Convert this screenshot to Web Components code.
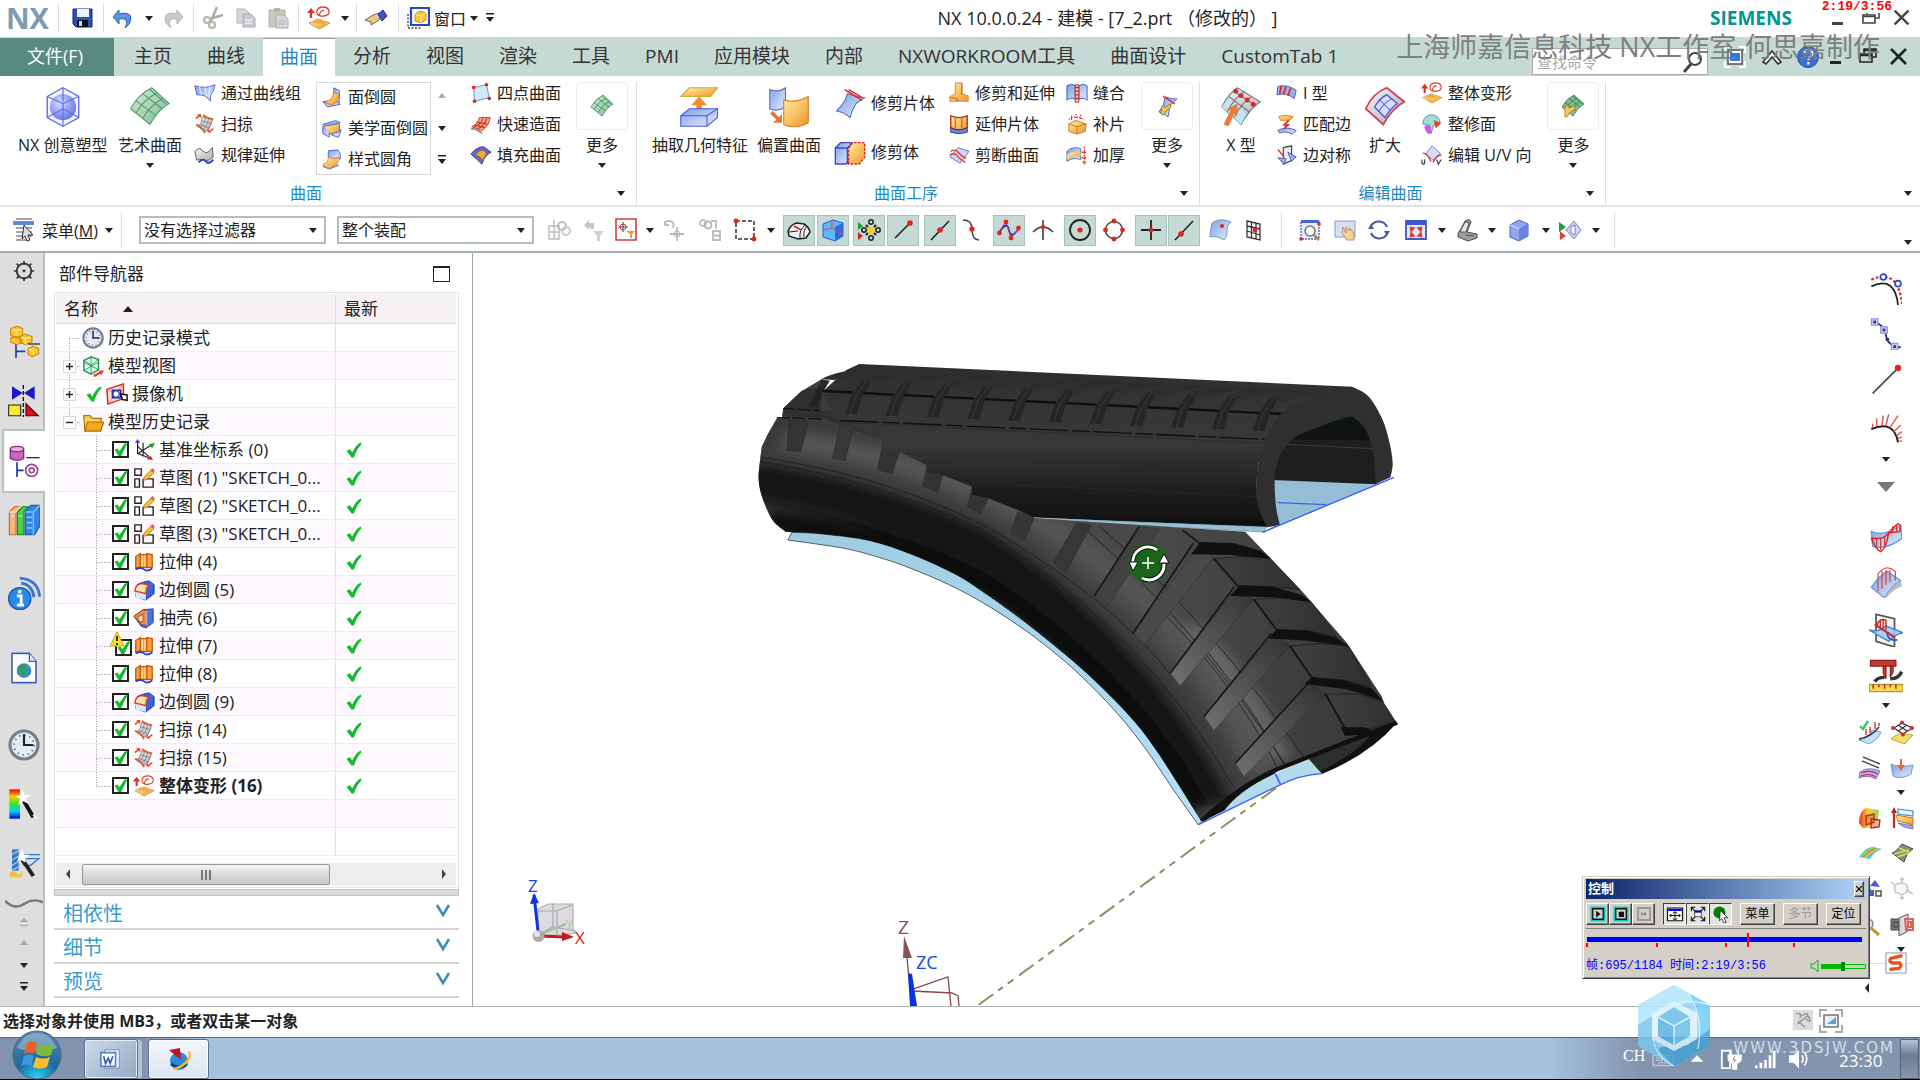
<!DOCTYPE html>
<html lang="zh-CN">
<head>
<meta charset="utf-8">
<title>NX 10.0.0.24 - 建模</title>
<style>
html,body{margin:0;height:100%;background:#fff}
body{font-family:"Open Sans","Noto Sans CJK SC",sans-serif;font-size:16px;color:#222;overflow:hidden}
</style>
</head>
<body>
<nx-app></nx-app>
<script>
const DEFS = `<defs>
<linearGradient id="b" x1="0" y1="0" x2="1" y2="1"><stop offset="0" stop-color="#7f9fe6"/><stop offset="1" stop-color="#e4eefc"/></linearGradient>
<linearGradient id="y" x1="0" y1="0" x2="1" y2="1"><stop offset="0" stop-color="#fff2a0"/><stop offset="1" stop-color="#f0932c"/></linearGradient>
<linearGradient id="g" x1="0" y1="0" x2="1" y2="1"><stop offset="0" stop-color="#f6f7f8"/><stop offset="1" stop-color="#a9adb5"/></linearGradient>
<linearGradient id="n" x1="0" y1="0" x2="1" y2="1"><stop offset="0" stop-color="#d5eedd"/><stop offset="1" stop-color="#7fb590"/></linearGradient>
<linearGradient id="rb" x1="0" y1="0" x2="0" y2="1"><stop offset="0" stop-color="#f00"/><stop offset=".25" stop-color="#fc0"/><stop offset=".5" stop-color="#2e2"/><stop offset=".75" stop-color="#0cf"/><stop offset="1" stop-color="#00c"/></linearGradient>
<linearGradient id="rh" x1="0" y1="0" x2="1" y2="0"><stop offset="0" stop-color="#e8301c"/><stop offset=".45" stop-color="#f8d03a"/><stop offset="1" stop-color="#8ed860"/></linearGradient>
<radialGradient id="s" cx=".4" cy=".35" r=".7"><stop offset="0" stop-color="#d7e0ff"/><stop offset="1" stop-color="#5b72e6"/></radialGradient>
</defs>`;
const dot=(x,y,r=2.4,c='#e0261c')=>`<circle cx="${x}" cy="${y}" r="${r}" fill="${c}"/>`;
const MESH=(fill,st)=>`<path d="M1 13Q5 5 13 1l10 9q-6 3-11 12z" fill="${fill}" stroke="${st}" stroke-width=".8"/><path d="M4 15.500Q8 8 16 4M8 18.500Q12 11 19.500 7M4 8.500l11 8M8 4.500l11 8.500M12 2l9 8" fill="none" stroke="${st}" stroke-width=".8"/>`;
const SWEEP=`<path d="M4 15Q9 11 9 4l11 3q-1 8-7 13z" fill="url(#g)" stroke="#666" stroke-width=".8"/><path d="M7 16Q12 11 12.500 5M10 18Q15 13 16 6M8 8.500l11 3M6 12.500l11 4" fill="none" stroke="#777" stroke-width=".8"/><path d="M2 13q5 0 10 9M10 2q3 3 11 5M2 6l5-4M4 2h3v3M16 21l5-4M18.500 20.500h-3v-3" fill="none" stroke="#e8572a" stroke-width="1.800"/>`;
const DEFORM=`<path d="M2 17l9-4 12 4-11 6z" fill="url(#y)" stroke="#d58a2a" stroke-width=".8"/><path d="M6 17q5-5 11 1" fill="#f8b244" stroke="#d58a2a" stroke-width=".8"/><path d="M4 12V6" stroke="#e0301c" stroke-width="2.200"/><path d="M0 7l4-5 4 5z" fill="#e0301c"/><path d="M14 10q-5-1-4-5 1-4 6-4t6 4-5 5-4-3 4-2" fill="none" stroke="#e0402c" stroke-width="1.300"/>`;
const EXTR=`<path d="M3 6l5-3v14l-5 2zM8 4h7v14H8zM15 3l6 1v14l-6 0z" fill="#f9a13a" stroke="#c8560c" stroke-width="1.400"/><path d="M10 5v12M13 5v12" stroke="#fde0a0" stroke-width="1.500"/><path d="M3 20q6-3 9 0t9-1" stroke="#2846c8" stroke-width="2" fill="none"/>`;
const BLEND=`<path d="M3 9q1-4 6-5l8-2 6 4v10l-9 7-11-4z" fill="#3a62e0" stroke="#2434a0"/><path d="M2 12l12 3v8l-11-3z" fill="#dbe6ff"/><path d="M2 13q1-8 8-8l8 2q-4 1-4 9z" fill="#fbe2a8" stroke="#e03a1c" stroke-width="1.500"/>`;
const CLOCK=`<circle cx="12" cy="12" r="10.500" fill="#e4ecf8" stroke="#777f8c" stroke-width="2.400"/><circle cx="12" cy="12" r="7.500" fill="none" stroke="#5a6375" stroke-width="1.300" stroke-dasharray="1 2.930"/><path d="M12 4v8h7" fill="none" stroke="#222" stroke-width="1.600"/>`;
const CHECK=`<path d="M3 13l4-2 3 4q4-9 10-12l1 2q-6 6-9 16H9z" fill="#16b82c"/>`;
const RESTORE=`<path d="M8 8V4h12v8h-4M4 9h12v8H4z" fill="none" stroke="currentColor" stroke-width="1.600"/><path d="M4 10.500h12M8 5.500h12" stroke="currentColor" stroke-width="1.600"/>`;
const I={
save:`<path d="M2 3h19v18H5l-3-3z" fill="#2b50b8" stroke="#14256e"/><path d="M6 3h12v8H6z" fill="#eef2fb"/><path d="M6 14h11v7H6z" fill="#111"/><path d="M8 15h3v5H8z" fill="#cfd6e6"/>`,
undo:`<path d="M2 11L8 4v4q11-3 12 4 0 6-6 10 3-5 1-8-2-2-7-1v5z" fill="#5b93e4" stroke="#2c62bd"/>`,
redo:`<path d="M22 11l-6-7v4Q5 5 4 12q0 6 6 10-3-5-1-8 2-2 7-1v5z" fill="#c6cbd1" stroke="#aeb4bb"/>`,
cut:`<path d="M15 1L9 15M21 9L7 13" stroke="#a9adad" stroke-width="2.600"/><circle cx="5" cy="14" r="3" fill="none" stroke="#b5b5a5" stroke-width="2"/><circle cx="10" cy="19" r="3" fill="none" stroke="#b5b5a5" stroke-width="2"/>`,
copy:`<path d="M3 3h8l4 4v10H3z" fill="#d5d5dc" stroke="#b2b2bb"/><path d="M9 8h8l4 4v9H9z" fill="#cacad2" stroke="#a9a9b2"/><path d="M11 14h7M11 17h7" stroke="#fff"/>`,
paste:`<path d="M2 4h16v17H2z" fill="#c9c8bc" stroke="#b3b2a6"/><path d="M7 2h6v4H7z" fill="#b5b5b5"/><path d="M9 9h8l4 4v9H9z" fill="#d8d8e0" stroke="#a9a9b2"/><path d="M11 15h7M11 18h7" stroke="#aaa"/>`,
deform:DEFORM,
hand:`<path d="M1 14l8-5q5-3 8 0l-2 5-8 5 0-3z" fill="#e8c98e" stroke="#8a6836"/><path d="M14 8l5-4 4 6-5 5z" fill="#3856c8" stroke="#1a2c80"/>`,
win:`<path d="M2 8v14h14" fill="none" stroke="#444" stroke-width="1.400" stroke-dasharray="2 1.500"/><path d="M5 2h18v17H5z" fill="#fff" stroke="#1f49d2" stroke-width="2.200"/><path d="M9 8l5-3 6 2v7l-5 3-6-2z" fill="#fbc52f" stroke="#d08a10"/><path d="M9 8l6 2v7M15 10l5-3" stroke="#fff3c0" fill="none"/>`,
min:`<path d="M5 16h11v3H5z" fill="currentColor"/>`,restore:RESTORE,close:`<path d="M4 4l15 15M19 4L4 19" stroke="currentColor" stroke-width="2.600"/>`,
mag:`<circle cx="14" cy="9" r="6" fill="none" stroke="#444" stroke-width="2"/><path d="M10 14l-7 8" stroke="#444" stroke-width="3"/>`,
fit:`<path d="M2 8V2h6M16 2h6v6M22 16v6h-6M8 22H2v-6" fill="none" stroke="#fff" stroke-width="2"/><path d="M5 5h14v14H5z" fill="#fff" stroke="#555" stroke-width="1.500"/><path d="M7 8h10v8H7z" fill="#2f7ad8"/>`,
chev:`<path d="M3 17l9-11 9 11-3 2-6-7-6 7z" fill="#fff" stroke="#333" stroke-width="1.600"/>`,
help:`<circle cx="12" cy="12" r="10.500" fill="#3a6fd4" stroke="#2450a8"/><path d="M8.500 9q0-4 4-4t4 3.500q0 2-2.500 3.500-1.500 1-1.500 3M12.300 17v2.500" fill="none" stroke="#fff" stroke-width="2.200"/>`,
studio:`<path d="M3 6L12 1l9 5v12l-9 5-9-5z" fill="#f4f5ff" stroke="#6a6af2" stroke-width=".8"/><circle cx="12" cy="12" r="7.500" fill="url(#s)"/><path d="M3 6l9 4 9-4M12 10v13M12 1v8M3 18l9-5 9 5" fill="none" stroke="#6a6af2" stroke-width=".7"/>`,
art:MESH('url(#n)','#4f9a65').replace(/\.8"/g,'.6"'),
thru:`<path d="M1 4q10 4 22-1l-2 7q-4 4-3 11-5-8-15-7z" fill="url(#b)" stroke="#4c62c8"/><path d="M6 5q0 5 3 9M12 6q0 4 2 10M17 5q-1 6 0 12" stroke="#fff" fill="none"/>`,
sweep:SWEEP,
law:`<path d="M1 8q5-6 9 0 5 4 10-4l1 10q-4 5-9 4Q5 15 3 18z" fill="url(#g)" stroke="#555"/><path d="M5 20q5-5 8-1t8-2" stroke="#3044c0" stroke-width="2.200" fill="none"/>`,
fblend:`<path d="M2 17l14-1 5 4-14 3z" fill="url(#b)" stroke="#4c62c8"/><path d="M14 2l6 3v13l-6-2z" fill="url(#b)" stroke="#4c62c8"/><path d="M4 17q9-1 10-10l5 2q1 9-8 12z" fill="url(#y)" stroke="#e0701c"/>`,
ablend:`<path d="M2 8l14-4 5 2-14 4zM15 13l7 1-3 8-7-2z" fill="url(#b)" stroke="#4c62c8"/><path d="M4 10l16-3v9l-10 3Q3 17 4 10z" fill="url(#y)" stroke="#5a6cb8"/><path d="M2 9v9l7 4v-5" fill="url(#b)" stroke="#4c62c8"/>`,
sblend:`<path d="M2 20l9-4 8 3-10 4z" fill="url(#b)" stroke="#4c62c8"/><path d="M8 3l10-1 3 4v6l-13-1z" fill="url(#b)" stroke="#4c62c8"/><path d="M8 10q6 3 12 0 0 8-11 12Q1 20 3 17q5-1 5-7z" fill="url(#y)" stroke="#e08a2c"/>`,
four:`<path d="M4 6l14-3 3 14-16 4z" fill="#d5e9fa" stroke="#5f8fc0"/>${dot(4,6,2)}${dot(18,3,2)}${dot(21,18,2)}${dot(5,21,2)}`,
rapid:`<path d="M2 15q8-4 8-10l12 0q-1 9-9 14z" fill="#f4a58c" stroke="#c8351c"/><path d="M5 15q8-3 9-9M9 17q8-4 9-11M7 10l12 2M5 13l11 3" fill="none" stroke="#c8351c" stroke-width="1.300"/><path d="M1 17q6 0 12 5" stroke="#888" fill="none" stroke-width="2"/>`,
fill:`<path d="M1 11q6-8 14-8l8 6q-7 3-10 13Q9 18 1 11z" fill="#5d6cc8" stroke="#2c3890"/><path d="M6 12q4-6 9-5l3 3-4 8q-3-5-8-6z" fill="#f6a93b" stroke="#a8600c"/>`,
mesh:MESH('url(#n)','#3f8a55'),
extract:`<path d="M6 1h16l-4 5H1z" fill="url(#y)" stroke="#d0b030" stroke-width=".7"/><path d="M10 15V11H7l4.500-5 4.500 5h-3v4z" fill="#f08a2c"/><path d="M1 17l5-4h16v5l-6 5H1z" fill="url(#b)" stroke="#4c58d8" stroke-width=".6"/><path d="M1 17h15l6-4M16 17v6" stroke="#4c58d8" fill="none" stroke-width=".6"/>`,
offset:`<path d="M1 2q5 2 9-1v11q-5 3-9 1z" fill="url(#b)" stroke="#4c70c8" stroke-width=".6"/><path d="M9 8q7 2 14-2v15q-7 4-14 1z" fill="url(#y)" stroke="#d07a1c" stroke-width=".6"/><path d="M2 15l4 4" stroke="#e8752c" stroke-width="2"/><path d="M8 16v5H3z" fill="#e8752c"/>`,
trimS:`<path d="M10 5q6 2 13 3l-6 4q-3 4-5 11-4-4-10-5Q9 11 10 5z" fill="url(#b)" stroke="#5a6cc0" stroke-width=".8"/><path d="M8 2l13 8M11 2l10 6" stroke="#e0261c" stroke-width="1.200"/>`,
trimB:`<path d="M1 9l4-4h8v12l-4 4H1z" fill="url(#b)" stroke="#3c48c8"/><path d="M1 9h9v12M10 9l4-4" fill="none" stroke="#3c48c8"/><path d="M11 9l3-4h9v11l-4 5h-8z" fill="url(#y)" stroke="#c8261c" stroke-dasharray="2 1"/>`,
trimE:`<path d="M8 1h7v12l7 2v6H2v-5l6-3z" fill="url(#y)" stroke="#c8931c"/><path d="M2 17q8 0 9 4M15 1v13" stroke="#d8701c" stroke-width="1.500" fill="none"/>`,
ext:`<path d="M3 3q9 4 18 0v13q-9 5-18 0z" fill="url(#y)" stroke="#b8261c" stroke-width="1.400"/><path d="M8 5v12M15 5v12" stroke="#e0602c" stroke-width="1.400"/><path d="M3 16q9 5 18 0v5q-9 3-18 0z" fill="#6a86dc" stroke="#2c3890"/>`,
snip:`<path d="M2 14l9-10 12 4-10 13z" fill="#cdd4f6" stroke="#6a6cc0"/><path d="M3 8q5-3 8 1t9 7M2 12q5-3 8 1t9 7" fill="none" stroke="#e0402c" stroke-width="1.500"/>`,
sew:`<path d="M1 4q5-3 9 0v15q-5-3-9 1zM14 4q5-3 9 0v16q-4-4-9-1z" fill="url(#b)" stroke="#3c58b8"/><path d="M10 3h4v19h-4z" fill="#f6d6d0" stroke="#b8261c"/><path d="M10 6h4M10 10h4M10 14h4M10 18h4" stroke="#b8261c" stroke-width="1.500"/>`,
patch:`<path d="M3 12l8-4 11 4-1 8-9 3-9-3z" fill="url(#y)" stroke="#c07a1c"/><path d="M3 12l9 3 10-3M12 15v8" stroke="#c07a1c" fill="none"/><path d="M3 7q8-6 17 1M6 3v5M11 1v6M16 2v5" stroke="#e0261c" stroke-dasharray="1.500 1.500" fill="none" stroke-width="1.300"/>`,
thick:`<path d="M1 8q6-6 15-3v12q-8-3-15 2z" fill="url(#b)" stroke="#4c70b8"/><path d="M1 12q6-5 15-3v5q-8-2-15 3z" fill="url(#y)"/><path d="M20 3v18M17 9h6M17 15h6" stroke="#e0261c" stroke-dasharray="2 1" stroke-width="1.400"/><path d="M17 19h6l-3 4z" fill="#e8752c"/>`,
tool:`<path d="M10 3q6 2 12 2l-6 5q-2 5-3 13-4-4-9-5 6-7 6-15z" fill="url(#b)" stroke="#5a6cc0"/><path d="M8 2l12 8" stroke="#e0261c" stroke-width="1.500"/><path d="M7 12q3-2 3 2l5-4 1 3-6 5q0 4-4 2z" fill="#f2ca54" stroke="#a87c18"/>`,
xform:`<path d="M1 12Q5 4 10 1l13 8q-6 4-11 13z" fill="url(#g)" stroke="#777" stroke-width=".6"/><path d="M1 12l4-5 10 9-3 6z" fill="#bfe6f4"/><path d="M4 15Q8 7 14 3M8 18Q12 10 18 6M5 6l12 9M8 3l12 8" stroke="#777" stroke-width=".6" fill="none"/>${dot(9,3,1.400)}${dot(12,5.500,1.400)}${dot(15.500,8,1.400)}${dot(19,10.500,1.400)}<path d="M2 22l4-8-2-1 6-3v7l-2-1-3 7z" fill="#ec7a34"/>`,
iform:`<path d="M2 5q10-3 20 4l-2 9Q11 11 1 14z" fill="#9fb0ea" stroke="#4c58b8"/><path d="M6 4l-2 9M11 5l-3 8M16 7l-3 8" stroke="#d8302c" stroke-width="2"/>`,
match:`<path d="M3 4q8-3 16 0l-4 4H5z" fill="url(#y)" stroke="#c8851c"/><path d="M2 19q9-5 20 0l-4 4Q9 19 4 22z" fill="url(#b)" stroke="#4c58b8"/><path d="M9 17l4-4H9l5-5" stroke="#d8302c" stroke-width="2" fill="none"/>`,
symm:`<path d="M8 4l9-2v16l-9 4z" fill="#eee" stroke="#444" stroke-width="1.300"/><path d="M2 15l7 7 2-6zM13 9l9 5-5 5z" fill="#9fb0ea" stroke="#4c58b8"/><path d="M2 6l7 8" stroke="#d8302c" stroke-width="1.500"/>`,
enlarge:`<path d="M1 13Q5 4 13 1l10 8q-7 4-12 13z" fill="url(#g)" stroke="#d84050" stroke-width="1"/><path d="M6 12q3-5 7-7l6 5q-4 3-7 8z" fill="#dce0ff" stroke="#4a56e8" stroke-width=".8"/><path d="M8.500 14.500q3-5 7-7M9 8l6 6" stroke="#4a56e8" stroke-width=".6" fill="none"/>`,
refine:`<path d="M2 12Q2 3 11 2q9 0 10 9l-7 2-3 9q-5-3-3-9z" fill="#9fe0d0" stroke="#5a8ac0"/><path d="M4 14l6-1 2 9-4 1q-5-4-4-9z" fill="#c860e0"/><path d="M14 8l8 3-6 6z" fill="#e8402c"/>`,
uv:`<path d="M12 2l9 8-7 8-9-7z" fill="#cfe0f6" stroke="#6a86c0"/><path d="M2 10q5 0 9 9M22 12q-5 0-9 8" stroke="#d8302c" fill="none" stroke-width="1.500"/><path d="M1 17v4q2 2 3 0v-4M17 17l2 5 3-5" fill="none" stroke="#333" stroke-width="1.200"/>`,
medit:MESH('#7fbe92','#2e7a44')+`<path d="M4 12q3-2 4 2l6-2 0 3-6 4q-1 5-4 4z" fill="#f2ca54" stroke="#a87c18" stroke-width=".8"/>`,
menu:`<path d="M1 3h21v4H1z" fill="#5d86e8"/><path d="M4 1h16M4 10h16M4 14h16M4 18h16M4 22h13" stroke="#888" stroke-width="1.600"/><path d="M12 7l9 10h-5l2 5-3 1-2-5-3 3z" fill="#ddd" stroke="#333"/>`,
g1:`<path d="M2 8h10v13H2zM7 2v19M2 14h10" fill="none" stroke="#bdbdbd" stroke-width="1.500"/><circle cx="15" cy="8" r="4" fill="none" stroke="#bdbdbd" stroke-width="2"/><circle cx="19" cy="13" r="4" fill="none" stroke="#c8c8c8" stroke-width="2"/>`,
g2:`<path d="M3 7l5-5v3h5v6H9V9H8v3z" fill="#c4c4c4"/><path d="M12 13h11l-4 5v5h-3v-5z" fill="#d2d2d2"/>`,
g3:`<path d="M2 1h20v21H2z" fill="#fff" stroke="#d83a3a" stroke-width="1.600"/><path d="M9 4v10M4 9h10" stroke="#444"/><circle cx="9" cy="9" r="3" fill="none" stroke="#d83a3a"/><path d="M12 13h9l-3 3v4h-2v-4z" fill="#f0a020"/>`,
g4:`<path d="M3 7q0-5 5-4t3 7M3 3v4h4M15 9v14M8 16h14" stroke="#b9b9b9" stroke-width="1.800" fill="none"/><circle cx="15" cy="16" r="3" fill="none" stroke="#b9b9b9"/>`,
g5:`<circle cx="4" cy="5" r="3" fill="none" stroke="#b4b4b4" stroke-width="1.600"/><circle cx="9" cy="7" r="3.500" fill="none" stroke="#b4b4b4" stroke-width="1.800"/><path d="M12 3h5v8M14 13h7v9h-7zM14 17.500h7" fill="none" stroke="#bdbdbd" stroke-width="1.800"/>`,
g6:`<path d="M3 3h18v18H3z" fill="none" stroke="#333" stroke-width="1.500" stroke-dasharray="4 2"/>${dot(3,3)}${dot(21,21)}`,
t1:`<path d="M1 13q3-7 9-8l7 1q5 3 6 8l-4 6-8 1-9-3z" fill="#eef1f8" stroke="#222" stroke-width="1.500"/><path d="M13 20q-1-8 5-13M17 19q-1-7 3-11M2 14l9-1" fill="none" stroke="#222"/><path d="M7 8l7 4" stroke="#e0261c" stroke-width="2"/>`,
t2:`<path d="M2 6l10-4 10 3v13l-8 5-12-4z" fill="#5fb6f4" stroke="#2a5ad8"/><path d="M14 9l8-4v13l-8 5z" fill="#2f6be8"/><path d="M2 12l9-2V2M11 10l11 6" stroke="#d84a6a" fill="none"/>`,
t3:`<path d="M1 4l5 4-5 4z" fill="#1ca02c"/><path d="M1 14l5 4-5 4z" fill="#d8261c"/><circle cx="14" cy="12" r="3.500" fill="#f2d21c"/>${[[14,4],[14,20],[7,12],[21,12]].map(p=>`<circle cx="${p[0]}" cy="${p[1]}" r="2.200" fill="none" stroke="#222" stroke-width="1.500"/>`).join('')}<path d="M9 7l2 2M19 7l-2 2M9 17l2-2M19 17l-2-2" stroke="#222" stroke-width="2"/>`,
t4:`<path d="M4 20L19 5" stroke="#222" stroke-width="1.600"/>${dot(19,5,2.800)}`,
t5:`<path d="M3 22L21 3" stroke="#222" stroke-width="1.600"/>${dot(12,12,2.800)}`,
t6:`<path d="M3 2q9 0 9 9 0 11 7 11" fill="none" stroke="#444" stroke-width="1.500"/>${dot(12,11,2.600)}`,
t7:`<path d="M2 15Q10 2 12 12t10-2" fill="none" stroke="#222" stroke-width="1.500"/><path d="M2 14L9 4l5 16 8-10" fill="none" stroke="#9a3ad0" stroke-width="1.300"/>${dot(2.500,15)}${dot(9,4)}${dot(14,20)}${dot(21.500,10)}`,
t8:`<path d="M12 2v20M2 14q10-10 20 0" fill="none" stroke="#333" stroke-width="1.500"/>${dot(12,9,2.200)}`,
t9:`<circle cx="12" cy="12" r="10" fill="none" stroke="#222" stroke-width="1.800"/>${dot(12,12,2.600)}`,
t10:`<circle cx="12" cy="12" r="8.500" fill="none" stroke="#444" stroke-width="1.400"/>${dot(12,3)}${dot(12,21)}${dot(3.500,12)}${dot(20.500,12)}`,
t11:`<path d="M12 2v20M2 12h20" stroke="#222" stroke-width="1.800"/>${dot(12,12,2.400)}`,
t12:`<path d="M3 22L21 3" stroke="#222" stroke-width="1.600"/>${dot(9,16,2.800)}`,
t13:`<path d="M4 5q8-6 19-1-5 4-4 9 1 5-3 9Q8 17 2 19q0-8 2-14z" fill="url(#b)" stroke="#7a96c8"/>${dot(14,8,2)}`,
t14:`<path d="M5 3l13 3v16L5 19zM9.500 4v16M14 5v16M5 8l13 3M5 13l13 4" fill="none" stroke="#333" stroke-width="1.300"/>${dot(13,12,2.400)}`,
v1:`<path d="M3 3h18v18H3z" fill="#e9ecfb" stroke="#4c62d8" stroke-width="1.400" stroke-dasharray="2 1"/><path d="M3 2h18v3H3z" fill="#4c62d8"/><circle cx="12" cy="13" r="5" fill="#fff" stroke="#777" stroke-width="1.500"/><path d="M16 17l5 5" stroke="#b8862c" stroke-width="2.600"/>${dot(21,6,1.800)}${dot(3,21,1.800)}`,
v2:`<path d="M2 3h20v16H2z" fill="#d5dff4" stroke="#8a9ac8"/><path d="M10 9l3 6V9l3 4 1-3 4 6v6h-7l-5-7z" fill="#f4d49a" stroke="#b8925a"/>`,
v3:`<path d="M20 9A9 9 0 0 0 4 8M4 15a9 9 0 0 0 16 1" fill="none" stroke="#4858a8" stroke-width="2"/><path d="M1 11h6L4 6zM23 13h-6l3 5z" fill="#4858a8"/>`,
v4:`<path d="M2 3h20v18H2z" fill="#dfe5fa" stroke="#3c58c8" stroke-width="1.800"/><path d="M2 3h20v4H2z" fill="#3c58c8"/><path d="M6 9l5 1-4 4zM18 9l-5 1 4 4zM6 19l5-1-4-4zM18 19l-5-1 4-4z" fill="#e0402c" stroke="#e0402c"/>`,
v5:`<path d="M10 3q5-3 6 1l-4 10 10 2v4l-9 3-10-4q-1-5 3-8z" fill="#9a9e9e" stroke="#4a4e4e"/><path d="M10 4l4 1-3 9-6 0zM11 17l8 1" fill="#e5e8e8" stroke="#555"/>`,
v6:`<path d="M3 7l9-5 9 4v12l-9 5-9-4z" fill="#8fa6ee" stroke="#4c62c8"/><path d="M12 11l9-5v12l-9 5z" fill="#6a82dc"/><path d="M3 7l9 4" stroke="#dfe6ff"/>`,
v7:`<path d="M1 4l7 5-7 5z" fill="#1c9c4c"/><path d="M2 13l6 5-6 4z" fill="#e0402c"/><path d="M16 3l7 9-7 9-8-9z" fill="#cfd6f2" stroke="#7884b8"/><path d="M13 9l4-2v10l-4-2z" fill="#fff" stroke="#7884b8"/>`,
gear:`<circle cx="12" cy="12" r="8" fill="none" stroke="#333" stroke-width="2"/><circle cx="12" cy="12" r="1.600" fill="#333"/><path d="M12 1v4M12 19v4M1 12h4M19 12h4M4 4l3 3M17 17l3 3M20 4l-3 3M7 17l-3 3" stroke="#333" stroke-width="1.800"/>`,
asm:`<path d="M2 2l5-2 4 2v5l-5 2-4-2zM9 8l4-2 5 2v4l-5 2-4-2zM15 17l4-2 4 2v4l-5 2-3-2zM2 9l4-1 4 2v3l-4 1-4-2z" fill="#fbc52f" stroke="#c78a12" stroke-width=".8"/><path d="M3 2.500l3 1v4M10 8.500l3 1v4M16 17.500l3 1v3M6 3.500l4-1M13 9.500l4-1" stroke="#fff0a8" stroke-width=".8" fill="none"/><path d="M15 13.500h9" stroke="#222" stroke-width=".9"/><path d="M6 14v10M6 19h7" stroke="#2a3aa8" stroke-width="1.300"/>`,
cons:`<path d="M3 1l8 5-8 5zM20 1l-8 5 8 5z" fill="#1a18c8"/><path d="M11.500 0v24" stroke="#111" stroke-dasharray="3 1.500"/><path d="M.5 15h9v8h-9z" fill="#fbe92c" stroke="#222" stroke-width=".8"/><path d="M13.500 14l9 9h-9z" fill="#d8141c" stroke="#700"/>`,
part:`<path d="M1 3v7q5 3 10 0V3" fill="#c86ab8" stroke="#8a2a80"/><ellipse cx="6" cy="3" rx="5" ry="2" fill="#e6b0de" stroke="#8a2a80"/><path d="M13 9.500h10" stroke="#333"/><path d="M6 13v11M6 19h5" stroke="#2a3aa8" stroke-width="1.300"/><circle cx="17" cy="19" r="4.500" fill="none" stroke="#9a4a90" stroke-width="1.300"/><circle cx="17" cy="19" r="1.800" fill="none" stroke="#9a4a90" stroke-width="1.300"/>`,
books:`<path d="M1 6l4-4h4L6 6v17H1z" fill="#f8b47c" stroke="#c8621c" stroke-width=".8"/><path d="M1 6h5l3-4" fill="none" stroke="#fff" stroke-width=".8"/><path d="M7 6l4-4h4l-3 4v17H7z" fill="#4ccf4c" stroke="#14841c" stroke-width=".8"/><path d="M13 6l4-5h7v15l-4 7h-7z" fill="#2f86e8" stroke="#1450a8" stroke-width=".8"/><path d="M13 6h6v17M19 6l5-5" fill="none" stroke="#8cc0fa"/><path d="M14 10h4M14 14h4M14 18h4M2 9h3M8 9h3" stroke="#d0e6ff" stroke-width=".8"/>`,
info:`<circle cx="9" cy="16" r="7.800" fill="#2a8ae8" stroke="#1a5ab0"/><path d="M7 14h3v6M7 20.500h5" stroke="#fff" stroke-width="2" fill="none"/><circle cx="9" cy="11" r="1.300" fill="#fff"/><path d="M10 5q8 1 9 10M9 1.500q13 1 14 13" fill="none" stroke="#3a76d0" stroke-width="2"/>`,
web:`<path d="M3 1h13l5 6v16H3z" fill="#fff" stroke="#3a62b8" stroke-width="1.200"/><path d="M16 1v6h5" fill="#dce6f8" stroke="#3a62b8"/><circle cx="12" cy="14" r="5.500" fill="#3a8ad8"/><path d="M8 11q4-4 6 0l-2 3 2 3-3 2q0-4-3-4zM15 12l2 1-1 4z" fill="#2aa04a"/>`,
clock:CLOCK,
rain:`<path d="M1 1h8v22H1z" fill="url(#rb)"/><path d="M11 8l8 14" stroke="#111" stroke-width="3"/><path d="M11 1l1.500 4.500L17 5l-3.500 3 2 4-4-2-4 3 1.500-5-4-2 4.500-.500z" fill="#fff"/><path d="M19 20l3 3" stroke="#eee" stroke-width="2"/>`,
mill:`<path d="M3 1h5v16H3z" fill="#3a76c8"/><path d="M3 5l5-3M3 9l5-3M3 13l5-3M3 17l5-3" stroke="#9cc8f0"/><path d="M9 8h14l-6 5h-5zM12 5h12" fill="#cfe0f6" stroke="#3a76c8"/><path d="M11 9l8 12" stroke="#222" stroke-width="3"/><path d="M1 19l3-2 4 3 3-2-1 4H2z" fill="#f4c42c"/><path d="M11 1l1 4 4 0-3 3 0 3-3-2-3 1 1-4z" fill="#fff"/>`,
wave:`<path d="M0 10q6 6 12 2t12-1" fill="none" stroke="#777" stroke-width="1.500"/>`,
views:`<path d="M2 6l8-4 8 3v11l-8 5-8-4z" fill="#e8f6ee" stroke="#1c9c5c" stroke-width="1.600"/><path d="M2 6l8 5 8-6M10 2v19M2 17l16-9M2 8l16 8" fill="none" stroke="#1c9c5c"/><path d="M13 23l7-4" stroke="#e8402c" stroke-width="2.500"/><path d="M18 17h6l-3 5z" fill="#e8402c"/>`,
check:CHECK,
cam:`<path d="M1 7l18-6v16L2 23z" fill="#f6dada" stroke="#d8261c" stroke-width="1.600"/><path d="M1 7l18 10M2 23L19 1" stroke="#e86a5c" stroke-width=".8"/><path d="M7 8h9v8H7z" fill="#e8ecff" stroke="#1c2ca0" stroke-width="1.600"/><circle cx="11" cy="12" r="3.500" fill="#fff" stroke="#3a4ac8" stroke-width="1.500"/><path d="M16 12l7 1v6l-5-1z" fill="#fff" stroke="#111" stroke-width="1.600"/>`,
folder:`<path d="M2 5h7l2 3h10v13H3z" fill="#f9d060" stroke="#a87310" stroke-width="1.300"/><path d="M6 12h18l-4 10H3z" fill="#f2a818" stroke="#a87310" stroke-width="1.300"/>`,
csys:`<path d="M5 2v14l14 5M5 16L21 6M11 4v15M5 8l12 11" fill="none" stroke="#222" stroke-width="1.300"/><path d="M2 4l3-4 3 4z" fill="#2a4ae8"/><path d="M24 4l-7 2 4 4z" fill="#1c9c2c"/><path d="M22 23l-7-1 4-4z" fill="#d8261c"/>`,
sketch:`<path d="M2 2h7v7H2zM2 13h5v9H2zM11 13h11v9H11v-9" fill="none" stroke="#222" stroke-width="1.500"/><path d="M11 15l2-5 7-7 3 3-7 7z" fill="#f6c23a" stroke="#a8701c" stroke-width=".8"/><path d="M19 4l2-3 3 3-2 2z" fill="#e05a5a"/>`,
extr:EXTR,blend:BLEND,
shell:`<path d="M1 10l10-7 11-1v15l-8 6-5-2z" fill="#4a72e8" stroke="#2434a0"/><path d="M1 10l10-7 4 1v16l-6-1z" fill="#f28a3a" stroke="#b8401c"/><path d="M5 11l6-3v8l-4 0z" fill="#fbe0b8" stroke="#b8401c"/><path d="M15 4v16" stroke="#bcd0ff"/>`,
word:`<path d="M5 2h16v20H5z" fill="#eef3fb" stroke="#6a8ac8"/><path d="M1 5h16v15H1z" fill="#fff" stroke="#5a7ec0" stroke-width="1.800"/><path d="M4 9l2 8 3-6 2 6 3-8" fill="none" stroke="#3a5ca8" stroke-width="1.800"/>`,
nxapp:`<circle cx="12" cy="14" r="9" fill="#2a8ad8"/><path d="M4 17q8 6 16 0" stroke="#0f4a88" fill="none" stroke-width="3"/><path d="M21 5q4 2 0 8-5 7-14 9" fill="none" stroke="#f4b83a" stroke-width="2.400"/><path d="M2 3l11-2 1 12z" fill="#c8101c"/>`,
r1:`<path d="M1 10q18-8 20 14" fill="none" stroke="#222" stroke-width="1.300"/><path d="M1 5q20-9 23 18" fill="none" stroke="#d8261c" stroke-width="1.600" stroke-dasharray="2 1.500"/><circle cx="10" cy="3" r="2.200" fill="#fff" stroke="#2a4ac8" stroke-width="1.300"/><circle cx="21" cy="8" r="2.200" fill="#fff" stroke="#2a4ac8" stroke-width="1.300"/>`,
r2:`<path d="M3 3q8 2 9 10t11 9" fill="none" stroke="#222" stroke-width="1.200"/>${[[3.500,3],[10.500,9],[18.500,21.500]].map(p=>`<path d="M${p[0]-2.500} ${p[1]-2.500}h5v5h-5z" fill="#c8c8f4" stroke="#8a8ae0" stroke-width=".8"/><path d="M${p[0]-1} ${p[1]-1}h2v2h-2z" fill="#2a2ab8"/>`).join('')}${dot(13,16,1.400,'#2a2ab8')}`,
r3:`<path d="M2 22L20 4" stroke="#444" stroke-width="1.200"/>${dot(21,3,2.400)}`,
r4:`<path d="M1 12q17-7 20 10" fill="none" stroke="#222" stroke-width="1.500"/><path d="M2 11V8M5 10V4M9 9l1-7M12 9l2-8M15 11l6-9M18 14l5-5M20 17l4-3M21 19l3-1M22 21h2" stroke="#e05a50" stroke-width="1.100"/>`,
r5:`<path d="M1 8q10 4 22-5l1 10Q12 22 2 19z" fill="url(#b)" stroke="#5a9ad8"/><path d="M1 13q9 1 12-3t8-8q3 1 1 6l-8 1q-2 12-6 14-3-1-7-10" fill="none" stroke="#d8261c" stroke-width="1.100"/><path d="M5 13v6M8 13v9M11 12v6M17 4v5M20 3v5" stroke="#d8261c" stroke-width=".8"/>`,
r6:`<path d="M1 16Q7 7 13 4l10 7q-7 4-12 13z" fill="url(#b)" stroke="#6a9ae0"/><path d="M11 24q5-9 12-13l1 4q-7 3-12 9z" fill="#bbb"/><path d="M6 19V6q6-8 13-2v7M9 17V4M12 14V3M15 12V3M6 10V6" stroke="#e0403a" fill="none" stroke-width=".9"/>`,
r7:`<path d="M5 1l13 3v20L5 20z" fill="#f2f4f8" stroke="#555" stroke-width="1.200"/><path d="M0 12q7 2 12-3l12 5q-6 1-10 6z" fill="#9fc8f2" fill-opacity=".85" stroke="#3a8ac8"/><path d="M5 10q2-7 7-5l0 7M8 5v5M10 5v6" stroke="#d8261c" fill="none"/><path d="M4 8l14 9" stroke="#d8261c" stroke-width="1.600"/><path d="M13 14q0 6 7 5" fill="none" stroke="#3a4ac8" stroke-width="1.200"/>`,
r8:`<path d="M1 1h18v4H1zM10 5h2v9l-2-4zM15 5h2v4l-2 4z" fill="#c8382c" stroke="#8a1c14" stroke-width=".8"/><path d="M4 16q2-3 7-3M15 14q6 0 8-5" fill="none" stroke="#333" stroke-width="2.400"/><path d="M0 18h24v5H0z" fill="#f9d65a" stroke="#b8962c"/><path d="M3 18v3M7 18v2M11 18v3M15 18v2M19 18v3" stroke="#a02c2c"/>`,
p1:`<path d="M2 6l3 3 5-8" stroke="#3cc85c" stroke-width="2.400" fill="none"/><path d="M1 20q10-2 13-10l9 2q-3 8-12 12z" fill="#bfe0f6" stroke="#4a9ad0" stroke-width=".8"/><path d="M1 19q12-2 20-12" stroke="#333" stroke-width="1.500" fill="none"/><path d="M8 15V9M12 13V7M17 9V2M21 6V3" stroke="#c8261c" stroke-width="1.300"/>`,
p2:`<path d="M1 19q8-7 14-5l8 1q-5 4-8 9z" fill="#f4dc6a" stroke="#c8a42c"/><path d="M4 8l8-5 10 5-9 6zM8 5l9 6M17 5L8 11" fill="none" stroke="#333" stroke-width="1.200"/>${dot(12,2.500,2)}${dot(3,8,2)}${dot(22,8,2)}${dot(13,14.500,2)}`,
p3:`<path d="M5 1l17 7M4 5l17 7" stroke="#555" stroke-width="1.400"/><path d="M2 16q8-6 20-1l-4 8Q9 18 1 22z" fill="#b4b8f0" stroke="#5a5ac8" stroke-width=".8"/><path d="M3 17q9-4 17 1M3 20q8-3 15 1" stroke="#d8304c" fill="none" stroke-width="1.300"/>`,
p4:`<path d="M1 8q3 2 8 2 6 1 14-1l-2 9q-10 6-18 2z" fill="url(#b)" stroke="#6a9ad8"/><path d="M11 3v7" stroke="#e8682c" stroke-width="2"/><path d="M7 9h8l-4 6z" fill="#e8682c"/>`,
p5:`<path d="M1 17Q1 5 8 2l13 2-1 9-9 9H5z" fill="url(#rh)"/><path d="M8 10l8-2v8l-8 3zM13 13l9 1-1 7-8 1z" fill="#e8603c" fill-opacity=".5" stroke="#a82c1c" stroke-width="1.300"/>`,
p6:`<path d="M4 22V6" stroke="#b82c1c" stroke-width="2.200"/><path d="M1 7l3-6 3 6z" fill="#b82c1c"/><path d="M8 3l15 2v5L8 8z" fill="#eaf4fc" stroke="#3a8ac8" stroke-width="1.200"/><path d="M6 9l17 3v7L8 15z" fill="url(#y)" stroke="#d0701c"/><path d="M8 17l15 3v3l-9-2z" fill="#9fb8f0" stroke="#4c62c8" stroke-width=".8"/>`,
p7:`<path d="M1 16Q8 6 14 6l10 2q-8 3-12 10z" fill="#58c0f0"/><path d="M4 16Q11 8 17 7" stroke="#7ae05a" stroke-width="3" fill="none"/><path d="M7 16Q14 9 20 8" stroke="#f0b83a" stroke-width="2" fill="none"/><path d="M5 16Q12 9 18 7" stroke="#f05a3a" fill="none"/>`,
p8:`<path d="M2 12q3 0 10-9l11 5q-6 3-9 13z" fill="#8a8f84" stroke="#444"/><path d="M4 13l15-4M7 16l12-4M9 7l10 4" stroke="#c8e84a" stroke-width="1.600"/>`,
p9:`<path d="M2 4l8-2 4 16H4z" fill="url(#rb)"/><path d="M12 10l5-6 5 7zM11 14h5v6h-5z" fill="#4a5ae0"/><path d="M18 15h5v5h-5z" fill="#fff" stroke="#555" stroke-width="1.600"/>`,
p10:`<path d="M1 6l4 3q6-4 12 0l1 6-6 4-7-3q-1-4 0-7z" fill="#f6f6f6" stroke="#c6c6c6" stroke-width="1.500"/><path d="M16 14l7 4M12 1v5M12 19v4" stroke="#c6c6c6" stroke-width="1.800"/><path d="M9 4l3-3 3 3zM9 21l3 3 3-3z" fill="#c6c6c6"/>`,
p11:`<path d="M3 1l3 6-3 5" stroke="#e0402c" fill="none" stroke-width="2"/><circle cx="10" cy="11" r="5" fill="#eef" stroke="#888" stroke-width="1.500"/><path d="M13 15l8 7" stroke="#c8962c" stroke-width="3"/>`,
p12:`<path d="M1 6h9v11H1zM4 9h4v5H4z" fill="#777" stroke="#444"/><path d="M9 5l9-4v17l-9 5z" fill="#d4d8cc" fill-opacity=".85" stroke="#555"/><path d="M15 6h8v11h-7zM18 9h3v5h-3z" fill="none" stroke="#e06060" stroke-width="2"/>`,
sogou:`<path d="M1 1h22v22H1z" fill="#fff" stroke="#9fb2cc" stroke-width="1.500"/><path d="M19 4L6 7q-2 4 2 5l8 0q3 3-1 6l-10 1" fill="none" stroke="#e8501c" stroke-width="3.600"/>`,
kb:`<rect x="1" y="8" width="22" height="11" rx="2" fill="none" stroke="#b8c6d6" stroke-width="1.600"/><path d="M4 11h16M4 13.500h16M7 16h10" stroke="#c8d4e2" stroke-width="1.500" stroke-dasharray="2 1"/><path d="M8 8q0-3 4-3t6-3" fill="none" stroke="#9fb0c4" stroke-width="1.400"/>`,
up:`<path d="M5 15l7-7 7 7z" fill="#fff"/>`,
plug:`<path d="M2 3h9v19H2z" fill="#78889e" stroke="#fff" stroke-width="2"/><path d="M9 8h14v4q-1 4-5 4v7h-4v-7q-4 0-5-4zM12 2v6M20 2v6" fill="#fff" stroke="#fff" stroke-width="1.600"/><path d="M16 9l-2 4h3l-2 3" stroke="#78889e" fill="none"/>`,
sig:`<path d="M1 19h3v3H1zM6 16h3v6H6zM11 13h3v9h-3zM16 8h3v14h-3zM20.500 3h3v19h-3z" fill="#fff"/>`,
vol:`<path d="M1 8h5l6-6v20l-6-6H1z" fill="#fff"/><path d="M15 8q3 4 0 8M18 5q5 7 0 14" stroke="#fff" stroke-width="1.800" fill="none"/>`,
st1:`<path d="M1 1h22v22H1z" fill="#dcdcdc"/><path d="M4 5h5v5M9 8l6-3 5 5M7 13l7 7M15 11l5 3M6 16l12-9M16 4l4 9" stroke="#9a9a9a" fill="none" stroke-width="1.500"/>`,
st2:`<path d="M1 8V1h7M16 1h7v7M23 16v7h-7M8 23H1v-7" fill="none" stroke="#aaa" stroke-width="2"/><path d="M5 6h14v12H5z" fill="#e8eff8" stroke="#777" stroke-width="1.600"/><path d="M8 15l9-7v7z" fill="#6a9ad8"/>`,
play:`<path d="M3 3h18v18H3z" fill="#d4d0c8" stroke="#0cc" stroke-width="2"/><path d="M5 5h14v14H5z" fill="none" stroke="#111" stroke-width="1.800"/><path d="M9.500 7.500l6 4.500-6 4.500z" fill="#111"/>`,
stop:`<path d="M3 3h18v18H3z" fill="#d4d0c8" stroke="#0cc" stroke-width="2"/><path d="M5 5h14v14H5z" fill="none" stroke="#111" stroke-width="1.800"/><path d="M9 9h7v7H9z" fill="#111"/>`,
ff:`<path d="M4 4h16v16H4z" fill="none" stroke="#999" stroke-width="2.500"/><path d="M8 9l4 3-4 3zM12 9l4 3-4 3z" fill="#888"/>`,
scr:`<path d="M2 4h20v17H2z" fill="#fff" stroke="#111" stroke-width="1.600"/><path d="M3 5h18v3H3z" fill="#00f"/><path d="M12 9v10M5 14h14M9 11l3-2 3 2M9 18l3 2 3-2M7 12l-2 2 2 2M17 12l2 2-2 2" fill="none" stroke="#111" stroke-width="1.300"/>`,
full:`<path d="M2 8V2h6M16 2h6v6M22 16v6h-6M8 22H2v-6M3 3l5 5M21 3l-5 5M3 21l5-5M21 21l-5-5" fill="none" stroke="#111" stroke-width="1.600"/><path d="M7 7h10v9H7z" fill="#fff" stroke="#111"/><path d="M7 7h10v3H7z" fill="#00f"/>`,
rec:`<circle cx="10" cy="10" r="8" fill="#008000"/><path d="M11 7l10 10h-5l3 6-3 1-3-6-3 3z" fill="#fff" stroke="#111"/>`
};

class Base extends HTMLElement{
  constructor(){super();this.attachShadow({mode:'open'});}
  paint(html){this.shadowRoot.innerHTML=html;}
}
const define=(n,fn)=>customElements.define(n,class extends Base{connectedCallback(){this.paint(fn(this));}});
const BTN=`button{font:inherit;color:inherit;background:none;border:0;padding:0;margin:0;display:inline-flex;align-items:center}`;

define('nx-icon',e=>{const s=e.getAttribute('size')||24;return `<style>:host{display:inline-flex;flex:none}svg{display:block}</style><svg width="${s}" height="${s}" viewBox="0 0 24 24" aria-hidden="true">${DEFS}${I[e.getAttribute('name')]||''}</svg>`;});
define('nx-arrow',e=>{const k=e.getAttribute('kind')||'down',c=e.getAttribute('tone')||'#222';
  const p={down:'M1 4h8l-4 5z',up:'M1 8h8l-4-5z',over:'M1 1h8v1.600H1zM1 5h8l-4 5z',upbar:'M1 10h8v1H1zM1 7h8l-4-4z',left:'M7 0v10l-4-5z',right:'M3 0v10l4-5z',sort:'M0 9h10L5 3z'}[k];
  return `<style>:host{display:inline-flex;flex:none;width:10px}</style><svg width="10" height="12" viewBox="0 0 10 12" aria-hidden="true"><path d="${p}" fill="${c}"/></svg>`;});

/* A bar is described as a list of [gap, kind, value]; each entry becomes one flex item. */
const bar=items=>items.map(([g,k,v])=>{
  const m=`style="margin-left:${g}px"`;
  if(k==='sep')return `<i class="sep" ${m}></i>`;
  if(k==='arr')return `<nx-arrow ${m} kind="${v||'down'}"></nx-arrow>`;
  if(k==='tog')return `<button class="tog" aria-pressed="true" aria-label="${v}" ${m}><nx-icon name="${v}"></nx-icon></button>`;
  if(k==='txt')return `<span ${m}>${v}</span>`;
  return `<button ${m} aria-label="${v}"><nx-icon name="${v}"></nx-icon></button>`;
}).join('');

define('nx-titlebar',()=>`<style>${BTN}
:host{display:flex;position:relative;height:37px;align-items:center;padding:0 7px 2px 6px;box-sizing:border-box;background:#fff}
.logo{font:bold 29px "Open Sans",sans-serif;color:#7d9bb0;width:44px;line-height:35px}
.sep{width:1px;height:28px;background:#dcdcdc}.title{flex:1;text-align:center;padding-left:10px;font-size:18px;line-height:24px;white-space:nowrap}
.brand{font:bold 19px/24px "Open Sans",sans-serif;color:#009793;width:117px}
.wb{display:flex;gap:8px;color:#444}
.time{position:absolute;right:28px;top:0;font:bold 13px/13px "Liberation Mono",monospace;color:#f00;background:#fff}
</style><span class="logo">NX</span>${bar([[8,'sep'],[12,'ic','save'],[8,'sep'],[7,'ic','undo'],[9,'arr'],[7,'ic','redo'],[8,'sep'],[8,'ic','cut'],[8,'ic','copy'],[9,'ic','paste'],[7,'sep'],[8,'ic','deform'],[9,'arr'],[6,'sep'],[7,'ic','hand'],[10,'sep'],[7,'ic','win'],[4,'txt','窗口'],[3,'arr'],[6,'arr','over']])}
<span class="title">NX 10.0.0.24 - 建模 - [7_2.prt （修改的） ]</span><span class="brand">SIEMENS</span>
<span class="wb"><button aria-label="最小化"><nx-icon name="min"></nx-icon></button><button aria-label="还原"><nx-icon name="restore"></nx-icon></button><button aria-label="关闭"><nx-icon name="close" size="22"></nx-icon></button></span>
<span class="time">2:19/3:56</span>`);

define('nx-tabs',()=>`<style>${BTN}
:host{display:flex;position:relative;height:39px;background:#c6dad5;font-size:19px;padding-right:9px;border-top:1px solid #d4d9d8;box-sizing:border-box}
nav{display:flex;align-items:stretch}nav button{padding:0 17px 2px;margin-right:1px;white-space:nowrap;color:#333;line-height:34px}
nav .file{width:114px;margin-right:3px;background:#588a80;color:#fff;justify-content:center;padding:0 4px 2px 0;font-size:18px;box-sizing:border-box}
nav .on{background:#fff;color:#1c8ac4;border-top:1px solid #999}
.r{margin-left:auto;display:flex;align-items:center;color:#222}
.find{display:flex;align-items:center;box-sizing:border-box;width:176px;height:27px;background:#fff;border:1px solid #a9a9a9;margin-top:9px;padding:0 2px}
input{border:0;outline:0;background:none;font:inherit;font-size:15px;min-width:0;flex:1;padding:0 2px}input::placeholder{color:#aaa}
.wm{position:absolute;right:40px;top:-9px;font-size:27px;line-height:36px;color:#7f7f7f;white-space:nowrap;z-index:2;pointer-events:none}
</style><nav><button class="file">文件(F)</button>${['主页','曲线','*曲面','分析','视图','渲染','工具','PMI','应用模块','内部','NXWORKROOM工具','曲面设计','CustomTab 1'].map(t=>t[0]==='*'?`<button class="on">${t.slice(1)}</button>`:`<button>${t}</button>`).join('')}</nav>
<div class="r"><label class="find"><input type="text" placeholder="查找命令" aria-label="查找命令"><nx-icon name="mag" size="24"></nx-icon></label>
${bar([[15,'ic','fit'],[13,'ic','chev'],[12,'ic','help'],[5,'ic','min'],[7,'ic','restore'],[7,'ic','close']])}</div>
<span class="wm">上海师嘉信息科技 NX工作室-何思嘉制作</span>`);

define('nx-cmd',e=>{const big=e.hasAttribute('big'),more=e.hasAttribute('more'),s=e.getAttribute('size')||(more?24:big?42:22);
return `<style>${BTN}:host{display:flex}button{white-space:nowrap;gap:5px;line-height:22px;flex:1}
.v{flex-direction:column;gap:0;align-self:stretch}.v .p{height:50px;display:flex;align-items:center;justify-content:center}
.v.more .p{width:52px;height:48px;border:1px solid #ececec;border-radius:4px;box-sizing:border-box}
.v span.t{margin-top:2px}.v.more span.t{margin-top:4px}.v nx-arrow{margin-top:3px}</style>
${big||more?`<button class="v ${more?'more':''}"><span class="p"><nx-icon name="${e.getAttribute('icon')}" size="${s}"></nx-icon></span><span class="t"><slot></slot></span>${more||e.hasAttribute('drop')?'<nx-arrow></nx-arrow>':''}</button>`
:`<button><nx-icon name="${e.getAttribute('icon')}" size="${s}"></nx-icon><span><slot></slot></span></button>`}`;});

define('nx-group',e=>`<style>:host{display:flex;flex-direction:column;box-sizing:border-box;height:122px;border-right:1px solid #ddd;flex:none}
.items{display:flex;align-items:flex-start;height:100px}.cap{position:relative;display:flex;justify-content:center;align-items:center;color:#1c8ac4;height:22px;line-height:22px;padding-right:24px}
nx-arrow{position:absolute;right:10px}</style><div class="items"><slot></slot></div><div class="cap">${e.getAttribute('label')}<nx-arrow></nx-arrow></div>`);

define('nx-ribbon',()=>{
const c=(i,t)=>`<nx-cmd icon="${i}">${t}</nx-cmd>`;
const col=(g,items,cls='')=>`<div class="col ${cls}" style="margin-left:${g}px">${items.map(x=>c(x[0],x[1])).join('')}</div>`;
const big=(g,w,i,t,x='')=>`<nx-cmd big ${x} icon="${i}" style="margin-left:${g}px;width:${w}px">${t}</nx-cmd>`;
const more=(g,i)=>`<nx-cmd more icon="${i}" style="margin-left:${g}px">更多</nx-cmd>`;
return `<style>:host{display:flex;height:131px;box-sizing:border-box;padding-top:6px;border-bottom:2px solid #e4e4e4;background:#fff;align-items:flex-start}
.col{display:flex;flex-direction:column;gap:9px}
.gal{border:1px solid #d8d8d8;box-sizing:border-box;width:115px;height:93px;padding:3px 4px}
.two{gap:17px;padding-top:5px}
.sp{display:flex;flex-direction:column;justify-content:space-between;width:22px;height:84px;align-items:center;padding:8px 0 0;box-sizing:border-box}
.end{margin:105px 7px 0 auto}</style>
<nx-group label="曲面" style="width:637px">
${big(18,88,'studio','NX 创意塑型')}${big(12,62,'art','艺术曲面','drop')}${col(14,[['thru','通过曲线组'],['sweep','扫掠'],['law','规律延伸']])}
${col(15,[['fblend','面倒圆'],['ablend','美学面倒圆'],['sblend','样式圆角']],'gal')}<div class="sp"><nx-arrow kind="up" tone="#aaa"></nx-arrow><nx-arrow></nx-arrow><nx-arrow kind="over"></nx-arrow></div>
${col(17,[['four','四点曲面'],['rapid','快速造面'],['fill','填充曲面']])}${more(15,'mesh')}</nx-group>
<nx-group label="曲面工序" style="width:563px">${big(15,96,'extract','抽取几何特征')}${big(9,64,'offset','偏置曲面')}
<div class="col two" style="margin-left:13px"><nx-cmd icon="trimS" size="32">修剪片体</nx-cmd><nx-cmd icon="trimB" size="32">修剪体</nx-cmd></div>
${col(13,[['trimE','修剪和延伸'],['ext','延伸片体'],['snip','剪断曲面']])}${col(11,[['sew','缝合'],['patch','补片'],['thick','加厚']])}${more(16,'tool')}</nx-group>
<nx-group label="编辑曲面" style="width:406px">${big(20,40,'xform','X 型')}${col(16,[['iform','I 型'],['match','匹配边'],['symm','边对称']])}${big(12,44,'enlarge','扩大')}
${col(14,[['deform','整体变形'],['refine','整修面'],['uv','编辑 U/V 向']])}${more(16,'medit')}</nx-group>
<nx-arrow class="end"></nx-arrow>`;});

define('nx-selbar',()=>`<style>${BTN}
:host{display:flex;align-items:center;height:46px;box-sizing:border-box;border-bottom:2px solid #9fb0ae;padding:2px 7px 0 12px;background:#fff}
.menu{gap:6px;width:102px}.menu nx-arrow{margin-left:auto}.sep{width:1px;height:34px;background:#ddd}
.box{position:relative;display:flex}.box nx-arrow{position:absolute;right:8px;top:8px;pointer-events:none}
select{appearance:none;font:inherit;color:#222;background:#fff;border:2px solid #b9bcbc;height:28px;padding:0 3px;box-sizing:border-box;border-radius:0;line-height:22px}
.tog{width:32px;height:31px;background:#c6dad5;border:1px solid #a5c4bc;justify-content:center;box-sizing:border-box}
.end{margin-left:auto;align-self:flex-end;padding-bottom:3px}</style>
<button class="menu"><nx-icon name="menu"></nx-icon><span>菜单(<u>M</u>)</span><nx-arrow></nx-arrow></button><i class="sep" style="margin-left:7px"></i>
<label class="box" style="margin-left:17px"><select style="width:187px" aria-label="过滤器"><option>没有选择过滤器</option></select><nx-arrow></nx-arrow></label>
<label class="box" style="margin-left:11px"><select style="width:197px" aria-label="范围"><option>整个装配</option></select><nx-arrow></nx-arrow></label>
${bar([[13,'ic','g1'],[10,'ic','g2'],[9,'ic','g3'],[7,'arr'],[7,'ic','g4'],[13,'ic','g5'],[10,'ic','g6'],[9,'arr'],[7,'tog','t1'],[2,'tog','t2'],[4,'tog','t3'],[2,'tog','t4'],[5,'tog','t5'],[4,'ic','t6'],[9,'tog','t7'],[6,'ic','t8'],[9,'tog','t9'],[6,'ic','t10'],[9,'tog','t11'],[1,'tog','t12'],[8,'ic','t13'],[10,'ic','t14'],[15,'sep'],[16,'ic','v1'],[11,'ic','v2'],[10,'ic','v3'],[13,'ic','v4'],[9,'arr'],[8,'ic','v5'],[8,'arr'],[10,'ic','v6'],[10,'arr'],[7,'ic','v7'],[9,'arr'],[13,'sep']])}
<nx-arrow class="end"></nx-arrow>`);

define('nx-resources',()=>{
const t=(g,i,s=32)=>`<button style="margin-top:${g}px" aria-label="${i}"><nx-icon name="${i}" size="${s}"></nx-icon></button>`;
return `<style>${BTN}:host{display:flex;flex-direction:column;align-items:center;width:45px;box-sizing:border-box;background:#dedede;border-right:2px solid #b9c1bf;padding-left:4px}
button{justify-content:center}.on{align-self:stretch;height:64px;background:#fff;border:2px solid #b9c1bf;border-right:0;margin:12px -2px 0 -2px;position:relative}
nx-arrow{margin-top:10px}.f{margin-top:-8px}</style>
${t(7,'gear',22)}${t(44,'asm')}${t(27,'cons')}<button class="on" aria-label="部件导航器"><nx-icon name="part" size="32"></nx-icon></button>
${t(11,'books')}${t(40,'info',34)}${t(42,'web')}${t(45,'clock')}${t(27,'rain')}${t(28,'mill')}${t(5,'wave',38)}
<nx-arrow class="f" kind="upbar" tone="#aaa"></nx-arrow><nx-arrow kind="up" tone="#aaa"></nx-arrow><nx-arrow></nx-arrow><nx-arrow kind="over"></nx-arrow>`;});

define('nx-navigator',()=>{
const ln=(lv,o)=>{const w=lv===1?26:56,x=lv===1?13.5:40.5;
 const ex=o.ex?`<path d="M7.500 8.500h12v12h-12z" fill="#fff" stroke="#d8d8d8"/><path d="M10 14.500h7${o.ex==='+'?'M13.500 11v7':''}" stroke="#222" stroke-width="1.400"/>`:'';
 return `<svg width="${w}" height="28" viewBox="0 0 ${w} 28" aria-hidden="true"><path d="M${x} ${o.first?14:0}V${o.last?14:28}M${x} 14.500H${w-2}" stroke="#999" stroke-dasharray="1 1.500" fill="none"/>${ex}</svg>`;};
const rows=[[1,'clock','历史记录模式',{first:1}],[1,'views','模型视图',{ex:'+'}],[1,'cam','摄像机',{ex:'+',ck:1}],[1,'folder','模型历史记录',{ex:'-',last:1}],
[2,'csys','基准坐标系 (0)'],[2,'sketch','草图 (1) "SKETCH_0...'],[2,'sketch','草图 (2) "SKETCH_0...'],[2,'sketch','草图 (3) "SKETCH_0...'],[2,'extr','拉伸 (4)'],[2,'blend','边倒圆 (5)'],[2,'shell','抽壳 (6)'],[2,'extr','拉伸 (7)',{warn:1}],[2,'extr','拉伸 (8)'],[2,'blend','边倒圆 (9)'],[2,'sweep','扫掠 (14)'],[2,'sweep','扫掠 (15)'],[2,'deform','整体变形 (16)',{last:1,b:1}]];
const tr=([lv,ic,t,o={}],i)=>`<tr><td><div class="c">${ln(lv,o)}${o.ck?'<nx-icon name="check" size="20" style="margin-right:2px;margin-left:2px"></nx-icon>':''}${lv===2?`<input type="checkbox" checked id="k${i}" class="${o.warn?'w':''}">${o.warn?'<svg class="warn" width="14" height="15" viewBox="0 0 14 15"><path d="M7 0l7 14H0z" fill="#f9e01c" stroke="#c8a80c"/><path d="M7 4v5M7 11v2" stroke="#222" stroke-width="1.800"/></svg>':''}`:''}<nx-icon name="${ic}" size="22"></nx-icon><label ${lv===2?`for="k${i}"`:''} class="${o.b?'b':''}">${t}</label></div></td><td>${lv===2?'<nx-icon name="check" size="20"></nx-icon>':''}</td></tr>`;
return `<style>${BTN}:host{display:flex;flex-direction:column;width:428px;box-sizing:border-box;border-right:1px solid #9fa8a8;background:#fff;padding:0 13px 8px 9px;font-size:17px}
.h{display:flex;height:39px;align-items:center;padding:0 9px 1px 5px;box-sizing:border-box}.max{margin-left:auto;width:17px;height:16px;border:1px solid #222;border-top-width:2px;margin-top:3px}
.tree{flex:1;border:1px solid #e4e4e4;display:flex;flex-direction:column;padding:1px 2px 1px 1px;min-height:0}
table{border-collapse:separate;border-spacing:0;table-layout:fixed;width:100%}
th{background:#f5f1f5;font-weight:400;text-align:left;height:30px;border-bottom:1px solid #ddd;padding:0 8px;box-sizing:border-box;line-height:24px}
th:first-child{width:280px}th nx-arrow{margin-left:25px}td,th{border-right:1px solid #e2e2e2;overflow:hidden}td:last-child,th:last-child{border-right:0}
td{padding:0;height:28px;box-sizing:border-box;border-bottom:1px solid #eee}tbody tr:nth-child(even){background:#fdf8fd}td:last-child{padding-left:8px;vertical-align:middle}td>nx-icon{display:flex}
.c{display:flex;align-items:center;height:27px;position:relative;white-space:nowrap}.c svg{flex:none}label{margin-left:4px;line-height:26px}.b{font-weight:700}
input{appearance:none;width:17px;height:17px;border:2px solid #222;margin:0 4px 0 0;background:#fff;flex:none;position:relative}
input::before{content:"";position:absolute;inset:0;background:#16b82c;clip-path:polygon(5% 50%,25% 42%,42% 62%,85% 0,100% 8%,55% 100%,35% 100%)}
input.w{margin:4px 1px 0 3px}.warn{position:absolute;left:54px;top:0}
.sb{display:flex;align-items:center;height:23px;background:#ededed;padding:0 7px;box-sizing:border-box;margin-top:auto}.th{margin-left:9px;width:248px;height:21px;border:1px solid #999;border-radius:2px;background:linear-gradient(#f4f4f4,#d9dadc 50%,#c6c7ca);box-sizing:border-box;display:flex;justify-content:center;gap:2px;align-items:center}
.th i{width:2px;height:10px;background:#777}.sb nx-arrow:last-child{margin-left:auto}
.sp{height:5px;background:#dcdcdc;border:1px solid #c4c4c4;margin-top:1px}
.sec{display:flex;align-items:center;justify-content:space-between;height:34px;box-sizing:border-box;border-bottom:2px solid #d4d4d4;padding:4px 8px 0 9px;color:#3b9cc8;font-size:20px;line-height:26px;width:100%}
.sec svg{margin-bottom:6px}</style>
<div class="h"><span>部件导航器</span><button class="max" aria-label="最大化"></button></div>
<div class="tree"><table><thead><tr><th>名称<nx-arrow kind="sort"></nx-arrow></th><th>最新</th></tr></thead><tbody>${rows.map(tr).join('')}<tr><td></td><td></td></tr><tr><td></td><td></td></tr></tbody></table>
<div class="sb"><nx-arrow kind="left" tone="#444"></nx-arrow><div class="th"><i></i><i></i><i></i></div><nx-arrow kind="right" tone="#444"></nx-arrow></div></div>
<div class="sp"></div>${['相依性','细节','预览'].map(t=>`<button class="sec">${t}<svg width="16" height="14" viewBox="0 0 16 14" aria-hidden="true"><path d="M2 1l6 10 6-10" fill="none" stroke="#3b8fb8" stroke-width="2.600"/></svg></button>`).join('')}`;});

/* Smooth curve through a list of points (Catmull-Rom to Bezier). */
const curve=(pts,move=true)=>{let d=(move?'M':'L')+pts[0];
  for(let i=0;i<pts.length-1;i++){const a=pts[i-1]||pts[i],b=pts[i],c=pts[i+1],e=pts[i+2]||c;
    d+=`C${b[0]+(c[0]-a[0])/6} ${b[1]+(c[1]-a[1])/6} ${c[0]-(e[0]-b[0])/6} ${c[1]-(e[1]-b[1])/6} ${c[0]} ${c[1]}`;}
  return d;};

define('nx-viewport',()=>{
const slits=[...Array(12)].map((_,i)=>{const x=187+i*94,y=118+i*5;return `<path d="M${x} ${y}l-25 45-14 54 27 3 12-54 20-44z" fill="#242624"/><path d="M${x} ${y}q40-30 120-${30-i}l60 4q-90 0-150 28z" fill="#2c2d2c"/><path d="M${x-14} ${y+102}l-14-2 14-54 25-46" stroke="#474a47" stroke-width="1.500" fill="none"/>`;}).join('');
const q=(p,f)=>`<polygon points="${p}" fill="${f}" stroke="#222" stroke-width="1"/>`;
const grooves=q('113,240 158,245 140,335 108,332','#343434')+q('232,250 262,258 243,362 213,355','#383838')+q('330,305 368,335 350,402 317,388','#333')+q('430,385 467,405 457,457 421,438','#333')+q('535,445 572,475 555,520 524,500','#333')+q('640,515 680,530 655,603 625,580','#363636')+q('775,550 810,555 752,697 723,665','#363836')+q('925,560 968,568 846,800 817,768','#404240')+q('1060,615 1092,655 933,915 906,880','#484a48')+q('1148,740 1185,778 1015,1038 992,1000','url(#gr)')+q('1230,885 1268,918 1093,1172 1070,1130','url(#gr)')+q('1312,1030 1350,1062 1162,1310 1142,1270','url(#gr)');
const arms=[[[1062,606],[1140,610],[1200,632],[1226,656],[1130,645],[1040,643]],[[1152,736],[1230,740],[1295,764],[1318,786],[1230,772],[1130,768]],[[1238,868],[1310,872],[1375,893],[1404,919],[1310,902],[1218,895]],[[1318,1012],[1390,1020],[1455,1044],[1484,1084],[1400,1048],[1302,1032]],[[1385,1162],[1440,1162],[1470,1180],[1395,1188]]].map(p=>`<path d="M${p.join('L')}z" fill="#0e110e"/>`).join('');
const tops=[[[1092,655],[1160,650],[1226,656],[1300,750],[1230,740],[1148,738]],[[1185,778],[1250,772],[1318,786],[1375,890],[1310,872],[1236,868]],[[1268,918],[1340,910],[1404,919],[1455,1040],[1390,1020],[1318,1012]],[[1350,1062],[1420,1062],[1484,1084],[1512,1148],[1440,1170],[1395,1165]]].map(p=>`<path d="M${p.join('L')}z" fill="url(#tp)" stroke="#1c1e1c" stroke-width="2"/><path d="M${p[0]}L${p[5]}" stroke="#161816" stroke-width="5"/>`).join('');
const upper=[[120,577],[190,582],[300,602],[400,645],[500,705],[560,755],[620,810],[700,890],[800,1000],[900,1130],[965,1240],[1065,1445]];
const lower=[[1057,1455],[1000,1350],[940,1235],[870,1120],[780,1000],[700,912],[640,855],[560,788],[480,733],[390,683],[320,652],[240,625],[110,600]];
const blue=curve(upper)+curve(lower,false)+'z';
const body='M45 375L50 320 65 280 85 235 97 233 100 205 140 155 185 120 190 160 225 250 265 265 330 300 332 320 368 335 430 375 428 400 467 405 535 440 533 465 572 475 640 510 680 535 1165 575 1220 650 1300 760 1400 910 1480 1070 1485 1090 1515 1150 1400 1205 1310 1250 1190 1315 1115 1390 1065 1445'+curve([...upper].reverse(),false).replace(/^L/,'L')+'L105 575'+curve([[105,575],[75,540],[52,475],[43,420],[45,375]],false)+'z';
const shoulder='M45 352Q330 410 560 560Q960 850 1150 1350';
const cap=curve([[1412,140],[1450,170],[1482,240],[1498,310],[1505,370],[1500,412]])+'L1466 432'+curve([[1466,432],[1460,340],[1445,275],[1420,238],[1395,233],[1290,285],[1255,325],[1240,365],[1233,420],[1236,500],[1245,555]],false)+curve([[1215,562],[1195,500],[1190,440],[1196,365],[1215,290],[1245,225],[1300,180],[1370,148],[1412,140]],false)+'z';
return `<style>:host{display:block;flex:1;min-width:0;background:#fff;overflow:hidden}svg{width:100%;height:100%;display:block}text{font-family:"Open Sans",sans-serif}</style>
<svg viewBox="473 253 1377 753" preserveAspectRatio="xMidYMid slice" role="img" aria-label="轮胎模型">
<defs><linearGradient id="tube" x1="0" y1="70" x2="0" y2="565" gradientUnits="userSpaceOnUse"><stop offset="0" stop-color="#2d2d2d"/><stop offset=".32" stop-color="#353635"/><stop offset=".5" stop-color="#373836"/><stop offset=".75" stop-color="#1e1e1e"/><stop offset=".9" stop-color="#161616"/><stop offset="1" stop-color="#0a0d0a"/></linearGradient>
<linearGradient id="gr" x1="1" y1="0" x2="0" y2="1"><stop offset="0" stop-color="#323232"/><stop offset="1" stop-color="#737173"/></linearGradient>
<linearGradient id="tp" x1="0" y1="0" x2="1" y2="0"><stop offset="0" stop-color="#3f413f"/><stop offset="1" stop-color="#2e302e"/></linearGradient>
<linearGradient id="ln" x1="0" y1="0" x2="1" y2="0"><stop offset="0" stop-color="#383838"/><stop offset=".6" stop-color="#4a4a4a"/><stop offset="1" stop-color="#333533"/></linearGradient>
<linearGradient id="bl" x1="0" y1="0" x2="1" y2="1"><stop offset="0" stop-color="#9ccbe0"/><stop offset="1" stop-color="#b6e2fa"/></linearGradient>
<filter id="soft" x="-20%" y="-20%" width="140%" height="140%"><feGaussianBlur stdDeviation="16"/></filter>
<clipPath id="tc"><path d="${body}"/></clipPath></defs>
<g transform="translate(740 340) scale(.43367 .33333)">
<path d="M190 155L245 90 275 72 1412 140 1300 200 1195 370 1190 440 1215 562 640 530 180 350z" fill="url(#tube)"/>
${slits}
<path d="M190 153L1252 222" stroke="#0d0f0d" stroke-width="7" stroke-dasharray="70 24"/><path d="M85 233L1210 298" stroke="#0d0f0d" stroke-width="4" stroke-dasharray="90 8 40 8"/>
<path d="M200 244L1210 310M370 340L1195 390M480 425L1190 470" stroke="#2d292d" stroke-width="2" fill="none"/>
<path d="M1225 430L1225 320 1280 270 1395 215 1450 250 1475 330 1468 434z" fill="#1e1e1e"/><path d="M1270 300L1300 260 1395 215 1450 250 1455 300z" fill="#101410"/><path d="M1255 313L1460 326" stroke="#444" stroke-width="2"/>
<path d="M1228 420L1468 433 1505 412 1208 577 1235 553z" fill="#95bdd6"/>
<path d="M650 533L1215 560 1208 576 725 543z" fill="#95c0d6" stroke="#456" stroke-width="1"/>
<path d="${cap}" fill="#2f2f2f"/>
<path d="M1508 412L1205 577M1240 488L1352 494" stroke="#4060f8" stroke-width="4"/>
<path d="${blue}" fill="url(#bl)" stroke="#333" stroke-width="2"/>
<path d="M1310 1250L1400 1205 1515 1148Q1450 1245 1342 1302z" fill="#111"/>
<path d="M1310 1258L1450 1187Q1430 1235 1330 1298z" fill="#2c2e2c"/>
<path d="M1065 1445L1190 1315 1235 1290 1235 1335z" fill="#111"/>
<path d="M1115 1415Q1150 1350 1235 1300L1310 1255 1342 1302Q1290 1305 1245 1335z" fill="#b2dcec"/>
<g clip-path="url(#tc)"><path d="M0 0H1568V1500H0z" fill="url(#ln)"/>
<g fill="none" filter="url(#soft)"><path d="M100 300Q500 370 760 600Q1080 880 1200 1300" stroke="#555" stroke-width="60"/><path d="M1040 860Q1180 1040 1250 1260" stroke="#6a686a" stroke-width="40"/><path d="${shoulder}" stroke="#3c3c3c" stroke-width="60"/>
<path d="M20 420Q320 480 540 620Q900 930 1080 1400" stroke="#191919" stroke-width="120"/><path d="M60 540Q340 580 560 730Q900 1030 1050 1400" stroke="#0c0f0c" stroke-width="60"/><path d="M90 590Q360 620 540 750Q880 1040 1040 1440" stroke="#1d1d1d" stroke-width="16"/></g>
<path d="M48 365Q330 425 550 565Q930 860 1140 1345M50 352Q330 405 570 560Q860 780 990 1000" stroke="#1b1b1b" stroke-width="2" fill="none"/>
<path d="M100 205L330 225 330 300 250 265 180 230zM100 155L190 145 185 235 97 228z" fill="#2f302f"/><path d="M185 130L158 200 178 205 190 160z" fill="#222"/><path d="M97 205L185 212M85 232L190 238" stroke="#111" stroke-width="4" stroke-dasharray="30 6"/>
<path d="M790 560Q1050 850 1260 1280M830 560Q1090 850 1310 1270M975 820Q1130 1010 1240 1285M1075 930Q1180 1100 1255 1275" stroke="#191919" stroke-width="2" fill="none"/>
${grooves}<path d="M1020 570L1062 612" stroke="#161816" stroke-width="5"/>${tops}${arms}
<path d="M920 560L817 768M1045 610L906 880M1140 740L992 1000M1225 880L1070 1130M1310 1030L1142 1270" stroke="#151715" stroke-width="4"/></g>
<path d="M1065 1442Q1150 1340 1235 1290L1400 1205 1515 1148" stroke="#101010" stroke-width="12" fill="none"/>
<path d="M1058 1453L1245 1335Q1290 1305 1342 1301M1235 1303L1246 1333" stroke="#4060f8" stroke-width="4" fill="none"/></g>
<path d="M1276 788L977 1006" stroke="#958b63" stroke-width="2" stroke-dasharray="18 7 7 6 6 6"/>
<circle cx="1148" cy="563" r="20" fill="#1c641c"/><g fill="none" stroke="#111" stroke-width="5"><path d="M1157 550a15 15 0 0 0-24 14M1142 578a15 15 0 0 0 22-14"/></g><g fill="none" stroke="#fff" stroke-width="3"><path d="M1157 550a15 15 0 0 0-24 14M1142 578a15 15 0 0 0 22-14"/></g><path d="M1129 562h9l-5 9zM1159 563h10l-5-9z" fill="#fff" stroke="#111"/><path d="M1148 557v12M1142 563h12" stroke="#fff" stroke-width="1.500"/>
<g><path d="M538 909l10-5h25v25l3 4-12 2h-26z" fill="#dddbe0" stroke="#b0aeb4" stroke-width="1.200"/><path d="M538 911h19l15-6M557 911v24M553 903v24l23 4M553 927l-14 7" fill="none" stroke="#aaa8ae" stroke-width="1.200"/><path d="M541 934l25-10" stroke="#9cc09c" stroke-width="2"/>
<path d="M534 895l4 36" stroke="#0a34e0" stroke-width="3"/><path d="M530 904l4-11 5 10z" fill="#0a34e0"/><path d="M540 936l24 1" stroke="#c41c1c" stroke-width="3"/><path d="M562 932l12 5-12 4z" fill="#c41c1c"/><circle cx="538.500" cy="936" r="6" fill="#aaa"/><circle cx="537" cy="934" r="3" fill="#e4e4e4"/>
<text x="528" y="892" font-size="17" fill="#1248f0">Z</text><text x="575" y="944" font-size="17" fill="#e02020">X</text><text x="566" y="929" font-size="13" fill="#a9c8a9">Y</text></g>
<g><text x="898" y="934" font-size="19" fill="#8a5454">Z</text><text x="916" y="969" font-size="18" fill="#1248f0">ZC</text><path d="M904 936l8 22h-9z" fill="#8a5454"/><path d="M907 957l3 33 38-13 3 29M912 991l40 2 6 3 1 10" stroke="#8a4a4a" fill="none" stroke-width="1.300"/><path d="M908 973l4 1 5 32h-7z" fill="#0a34e0"/></g>
</svg>`;});

define('nx-tools',()=>{
const one=(g,i,s=32)=>`<button style="margin-top:${g}px" aria-label="${i}"><nx-icon name="${i}" size="${s}"></nx-icon></button>`;
const two=(g,a,b)=>`<div style="margin-top:${g}px"><button aria-label="${a}"><nx-icon name="${a}" size="24"></nx-icon></button><button aria-label="${b}"><nx-icon name="${b}" size="24"></nx-icon></button></div>`;
return `<style>${BTN}:host{display:flex;flex-direction:column;align-items:center;width:70px;box-sizing:border-box;background:#fff;padding-left:2px}div{display:flex;gap:8px}
.r{align-self:flex-end;margin-right:14px}hr{width:52px;border:0;border-top:1px solid #ddd;margin:8px 0 0}.s{margin:-12px 0 0 20px}.l{align-self:flex-start;margin:9px 0 0 10px}</style>
${one(20,'r1')}${one(13,'r2')}${one(14,'r3')}${one(17,'r4')}<nx-arrow style="margin-top:8px"></nx-arrow><svg width="18" height="11" viewBox="0 0 18 11" style="margin-top:17px"><path d="M0 0h18l-9 10z" fill="#777"/></svg>
${one(28,'r5')}${one(13,'r6')}${one(15,'r7',34)}${one(12,'r8',34)}<nx-arrow style="margin-top:6px"></nx-arrow>
${two(9,'p1','p2')}${two(12,'p3','p4')}<nx-arrow class="r" style="margin-top:6px"></nx-arrow>${two(8,'p5','p6')}${two(11,'p7','p8')}${two(11,'p9','p10')}${two(13,'p11','p12')}<nx-arrow class="r" style="margin-top:6px"></nx-arrow><hr><button class="s" aria-label="输入法"><nx-icon name="sogou" size="22"></nx-icon></button><nx-arrow kind="left" class="l"></nx-arrow>`;});

define('nx-player',()=>`<style>:host{display:block;box-sizing:border-box;width:288px;background:#d4d0c8;border:1px solid;border-color:#d4d0c8 #404040 #404040 #d4d0c8;padding:2px 3px 3px;font:12px/14px "Liberation Sans","Noto Sans CJK SC",sans-serif;color:#000;box-shadow:inset 1px 1px #fff,inset -1px -1px #808080}
.t{display:flex;align-items:center;height:20px;background:linear-gradient(90deg,#0a246a,#a6caf0 94%);color:#fff;font-size:13px;font-weight:700;padding:0 2px}
button{font:inherit;color:inherit;background:#d4d0c8;border:1px solid;border-color:#fff #404040 #404040 #fff;box-shadow:inset -1px -1px #808080;padding:0;display:flex;align-items:center;justify-content:center;box-sizing:border-box}
.t button{margin-left:auto;width:10px;height:16px}
.b{display:flex;margin-top:4px;border-bottom:1px solid #808080;padding-bottom:3px}.b button{width:23px;height:22px}.b .d{border-color:#404040 #fff #fff #404040;box-shadow:none;background:#e6e4df}.b .x{width:35px;margin-left:8px}.b .off{color:#999}
.s{position:relative;margin:8px 4px 0 1px;height:5px;background:#00f}.s i{position:absolute;width:2px;height:4px;top:6px;background:#f00}.s i.k{height:14px;top:-4px}
.i{display:flex;justify-content:space-between;align-items:center;margin-top:15px;color:#00f;font:12px/18px "Liberation Mono","Noto Sans CJK SC",monospace;white-space:nowrap}
.i svg{display:block}</style>
<div class="t">控制<button aria-label="关闭"><svg width="6" height="6" viewBox="0 0 6 6" aria-hidden="true"><path d="M0 0l6 6M6 0L0 6" stroke="#000" stroke-width="1.200"/></svg></button></div>
<div class="b"><button aria-label="播放"><nx-icon name="play" size="18"></nx-icon></button><button aria-label="停止"><nx-icon name="stop" size="18"></nx-icon></button><button aria-label="快进"><nx-icon name="ff" size="18"></nx-icon></button><button class="d" style="margin-left:8px" aria-label="窗口"><nx-icon name="scr" size="18"></nx-icon></button><button class="d" aria-label="全屏"><nx-icon name="full" size="16"></nx-icon></button><button class="d" aria-label="光标"><nx-icon name="rec" size="18"></nx-icon></button><button class="x">菜单</button><button class="x off">多节</button><button class="x">定位</button></div>
<div class="s"><i style="left:-1px"></i><i style="left:25%"></i><i style="left:50%"></i><i class="k" style="left:58%"></i><i style="left:75%"></i></div>
<div class="i"><span>帧:695/1184 时间:2:19/3:56</span><svg width="56" height="14" viewBox="0 0 56 14" aria-hidden="true"><path d="M1 5h3l4-4v12L4 9H1z" fill="none" stroke="#0b0"/><path d="M11 5h21v5H11z" fill="#0b0"/><path d="M32.500 5.500h23v4h-23z" fill="none" stroke="#0b0"/><path d="M31 3h4v9h-4z" fill="#080"/></svg></div>`);

define('nx-status',()=>`<style>:host{display:flex;align-items:center;height:31px;box-sizing:border-box;border-top:1px solid #a9b5b2;background:#fff;font-weight:700;font-size:16px;padding:0 77px 3px 3px;line-height:22px}.r{margin-left:auto;display:flex;gap:5px}</style><span>选择对象并使用 MB3，或者双击某一对象</span><span class="r"><nx-icon name="st1" size="22"></nx-icon><nx-icon name="st2" size="24"></nx-icon></span>`);

define('nx-taskbar',()=>`<style>${BTN}:host{display:flex;position:relative;height:43px;box-sizing:border-box;align-items:center;border-top:1px solid #5a6a7a;border-bottom:1px solid #000;background:linear-gradient(90deg,#8193ae 0 140px,#a4c1de 210px 1550px,#8394ae 1640px);padding-left:84px;color:#fff}
.orb{position:absolute;left:12px;top:-8px}.t{box-sizing:border-box;width:54px;height:40px;border:1px solid #5c6e88;border-radius:3px;justify-content:center;background:linear-gradient(135deg,#cdd9e8,#93a9c6);box-shadow:inset 0 0 0 1px #e4ecf5,5px 0 0 -1px #b4c3d6}
.t.a{width:61px;margin-left:10px;background:linear-gradient(#f2f6fb,#dbe5f1);box-shadow:inset 0 0 0 1px #fff}
.r{margin-left:auto;display:flex;align-items:center}.ch{font:16px "Liberation Serif",serif;width:29px;padding-bottom:6px}.clk{font-size:17px;line-height:14px;width:61px;margin-left:29px;padding-top:5px}.sd{width:19px;height:40px;border:1px solid #52607a;box-sizing:border-box;background:linear-gradient(#b9c3d2,#6d7c92 40%,#8796ac);margin-right:1px}
.wm{position:absolute;right:25px;top:3px;font:15px/14px "DejaVu Sans",sans-serif;letter-spacing:2px;color:#d3deea;white-space:nowrap}
.hex{position:absolute;right:210px;bottom:12px;opacity:.85}</style>
<button class="orb" aria-label="开始"><svg width="50" height="50" viewBox="0 0 50 50"><defs><radialGradient id="o" cx=".5" cy="1" r="1"><stop offset="0" stop-color="#2ad8f8"/><stop offset=".45" stop-color="#1a6aa0"/><stop offset="1" stop-color="#5a84a8"/></radialGradient></defs><circle cx="25" cy="25" r="24" fill="url(#o)" stroke="#4a6484"/><path d="M5 18Q12 3 25 3t20 15q-20 8-40 0z" fill="#fff" opacity=".3"/><path d="M15 13q6-4 10 0l-3 11q-5-3-10 0z" fill="#e8602c"/><path d="M27 14q6 3 15 0l-3 11q-7 3-15-1z" fill="#7cbc3c"/><path d="M12 26q5-3 10 0l-3 10q-5-3-10 0z" fill="#3a9ae0"/><path d="M24 27q7 3 14 0l-3 10q-7 3-14 0z" fill="#fbbf2c"/></svg></button>
<button class="t" aria-label="Word"><nx-icon name="word" size="22"></nx-icon></button><button class="t a" aria-label="NX"><nx-icon name="nxapp" size="24"></nx-icon></button>
<div class="r"><span class="ch">CH</span><nx-icon name="kb" size="22"></nx-icon><nx-icon name="up" size="22" style="margin-left:12px"></nx-icon><nx-icon name="plug" size="22" style="margin-left:12px"></nx-icon><nx-icon name="sig" size="22" style="margin-left:12px"></nx-icon><nx-icon name="vol" size="22" style="margin-left:12px"></nx-icon><span class="clk">23:30</span><button class="sd" aria-label="显示桌面"></button></div>
<svg class="hex" width="72" height="82" viewBox="0 0 72 82" aria-hidden="true"><path d="M36 0l36 20v41L36 81 0 61V20z" fill="#8fd4f6"/><path d="M36 0l36 20v0L50 18 19 28 0 40V20z" fill="#b2e4fb"/><path d="M72 20v30L60 64 62 36 50 8z" fill="#72cdf6"/><path d="M36 81L15 68l8-6 28-3 21-15v17z" fill="#45a3d8"/><path d="M0 40l19-12-4 24 8 16 13 13L0 61z" fill="#7cc6ee"/><path d="M36 16l23 12v26L36 66 14 54V28z" fill="#d9f1fc"/><path d="M36 22l16 10v19L36 60 20 51V32z" fill="#69bfea"/><path d="M20 32l16 9v19L20 51z" fill="#56b2e4"/><path d="M20 32l16 9 16-9M36 41v19" fill="none" stroke="#d9f1fc" stroke-width="1.500"/><path d="M72 20q-28-10-53 8M50 8q16 24 10 56M15 52q2 20 21 29M51 59q-22 6-36-7" fill="none" stroke="#d9f1fc" stroke-width="1.200"/></svg>
<span class="wm">WWW.3DSJW.COM</span>`);

define('nx-app',()=>`<style>:host{display:flex;flex-direction:column;height:100vh;line-height:normal}main{flex:1;display:flex;min-height:0;position:relative}
nx-player{position:absolute;right:50px;bottom:27px}nx-titlebar,nx-tabs,nx-ribbon,nx-selbar,nx-status,nx-taskbar,nx-resources,nx-navigator,nx-tools{flex-shrink:0}</style>
<nx-titlebar></nx-titlebar><nx-tabs></nx-tabs><nx-ribbon></nx-ribbon><nx-selbar></nx-selbar>
<main><nx-resources></nx-resources><nx-navigator></nx-navigator><nx-viewport></nx-viewport><nx-tools></nx-tools><nx-player></nx-player></main>
<nx-status></nx-status><nx-taskbar></nx-taskbar>`);
</script>
</body>
</html>
